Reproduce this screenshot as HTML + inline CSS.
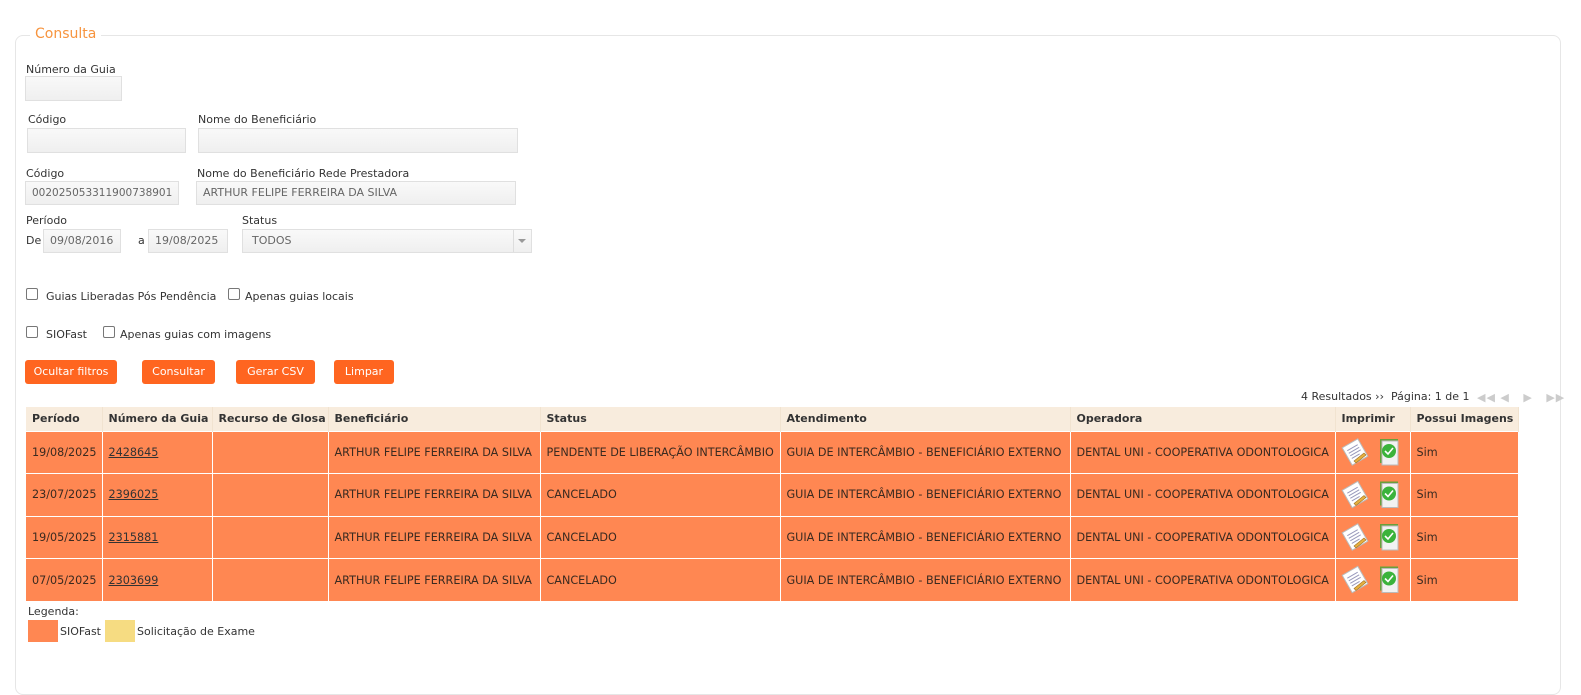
<!DOCTYPE html>
<html><head><meta charset="utf-8"><style>
*{box-sizing:border-box;margin:0;padding:0}
body{width:1581px;height:672px;background:#fff;font-family:"DejaVu Sans","Liberation Sans",sans-serif;font-size:11px;color:#333;position:relative;overflow:hidden}
.a{position:absolute;white-space:nowrap}
.fs{position:absolute;left:15px;top:35px;width:1546px;height:660px;border:1px solid #e6e6e6;border-radius:8px}
.lg{position:absolute;left:30px;top:26px;background:#fff;padding:0 5px;color:#f7943e;font-size:14px;font-family:"DejaVu Sans",sans-serif}
.in{position:absolute;border:1px solid #e0e0e0;background:linear-gradient(#f9f9f9,#efefef);color:#666;padding-left:6px;line-height:22px;font-size:11px}
.cb{position:absolute;width:12px;height:12px;border:1px solid #777;border-radius:2px;background:#fff}
.bt{position:absolute;top:360px;height:24px;background:#ff6520;color:#fff;border-radius:3px;text-align:center;line-height:24px;font-size:11px}
table{position:absolute;left:26px;top:407px;border-collapse:collapse;table-layout:fixed;width:1492px}
th{background:#f8ecdd;height:24px;text-align:left;padding-left:6px;font-weight:bold;font-size:11px;border-right:1px solid #f1e3d0;color:#333;white-space:nowrap;overflow:hidden}
td{background:#ff8752;height:42.5px;padding-left:6px;border-right:1px solid #fff;border-top:1px solid #fff;white-space:nowrap;overflow:hidden;font-size:11.2px;color:#3a2a20}
td u{color:#333}
</style></head><body>
<div class="fs"></div>
<div class="lg">Consulta</div>
<div class="a" style="left:26px;top:63px">Número da Guia</div>
<div class="in" style="left:25px;top:76px;width:97px;height:25px"></div>
<div class="a" style="left:28px;top:113px">Código</div>
<div class="in" style="left:27px;top:128px;width:159px;height:25px"></div>
<div class="a" style="left:198px;top:113px">Nome do Beneficiário</div>
<div class="in" style="left:198px;top:128px;width:320px;height:25px"></div>
<div class="a" style="left:26px;top:167px">Código</div>
<div class="in" style="left:25px;top:181px;width:154px;height:24px;font-size:10.5px">002025053311900738901</div>
<div class="a" style="left:197px;top:167px">Nome do Beneficiário Rede Prestadora</div>
<div class="in" style="left:196px;top:181px;width:320px;height:24px">ARTHUR FELIPE FERREIRA DA SILVA</div>
<div class="a" style="left:26px;top:214px">Período</div>
<div class="a" style="left:26px;top:234px">De</div>
<div class="in" style="left:43px;top:229px;width:78px;height:24px">09/08/2016</div>
<div class="a" style="left:138px;top:234px">a</div>
<div class="in" style="left:148px;top:229px;width:80px;height:24px">19/08/2025</div>
<div class="a" style="left:242px;top:214px">Status</div>
<div class="in" style="left:242px;top:229px;width:290px;height:24px;padding-left:9px">TODOS</div>
<div class="a" style="left:513px;top:230px;width:18px;height:22px;border-left:1px solid #ddd"></div>
<div class="a" style="left:518px;top:239px;width:0;height:0;border-left:4px solid transparent;border-right:4px solid transparent;border-top:4px solid #999"></div>
<div class="cb" style="left:26px;top:288px"></div><div class="a" style="left:46px;top:290px">Guias Liberadas Pós Pendência</div>
<div class="cb" style="left:228px;top:288px"></div><div class="a" style="left:245px;top:290px">Apenas guias locais</div>
<div class="cb" style="left:26px;top:326px"></div><div class="a" style="left:46px;top:328px">SIOFast</div>
<div class="cb" style="left:103px;top:326px"></div><div class="a" style="left:120px;top:328px">Apenas guias com imagens</div>
<div class="bt" style="left:25px;width:92px">Ocultar filtros</div>
<div class="bt" style="left:142px;width:73px">Consultar</div>
<div class="bt" style="left:236px;width:79px">Gerar CSV</div>
<div class="bt" style="left:334px;width:60px">Limpar</div>
<div class="a" style="left:1301px;top:390px;font-size:11px">4 Resultados ›› &nbsp;Página: 1 de 1</div>
<div class="a" style="left:1477px;top:391px;color:#ccc;font-size:11px;letter-spacing:1px">◀◀ ◀ &nbsp;&nbsp;▶ &nbsp;&nbsp;▶▶</div>
<table>
<colgroup><col style="width:76px"><col style="width:110px"><col style="width:116px"><col style="width:212px"><col style="width:240px"><col style="width:290px"><col style="width:265px"><col style="width:75px"><col style="width:108px"></colgroup>
<tr><th>Período</th><th>Número da Guia</th><th>Recurso de Glosa</th><th>Beneficiário</th><th>Status</th><th>Atendimento</th><th>Operadora</th><th>Imprimir</th><th>Possui Imagens</th></tr>
<tr><td>19/08/2025</td><td><u>2428645</u></td><td></td><td>ARTHUR FELIPE FERREIRA DA SILVA</td><td>PENDENTE DE LIBERAÇÃO INTERCÂMBIO</td><td>GUIA DE INTERCÂMBIO - BENEFICIÁRIO EXTERNO</td><td>DENTAL UNI - COOPERATIVA ODONTOLOGICA</td><td></td><td>Sim</td></tr>
<tr><td>23/07/2025</td><td><u>2396025</u></td><td></td><td>ARTHUR FELIPE FERREIRA DA SILVA</td><td>CANCELADO</td><td>GUIA DE INTERCÂMBIO - BENEFICIÁRIO EXTERNO</td><td>DENTAL UNI - COOPERATIVA ODONTOLOGICA</td><td></td><td>Sim</td></tr>
<tr><td>19/05/2025</td><td><u>2315881</u></td><td></td><td>ARTHUR FELIPE FERREIRA DA SILVA</td><td>CANCELADO</td><td>GUIA DE INTERCÂMBIO - BENEFICIÁRIO EXTERNO</td><td>DENTAL UNI - COOPERATIVA ODONTOLOGICA</td><td></td><td>Sim</td></tr>
<tr><td>07/05/2025</td><td><u>2303699</u></td><td></td><td>ARTHUR FELIPE FERREIRA DA SILVA</td><td>CANCELADO</td><td>GUIA DE INTERCÂMBIO - BENEFICIÁRIO EXTERNO</td><td>DENTAL UNI - COOPERATIVA ODONTOLOGICA</td><td></td><td>Sim</td></tr>
</table>
<svg class="a" style="left:1340px;top:436px" width="70" height="170">
<g id="ic">
<g transform="rotate(-30 15 16)"><rect x="6" y="6" width="18" height="20" fill="#fff" stroke="#bbb"/><path d="M9 11h12M9 14h12M9 17h12M9 20h9" stroke="#99b" stroke-width="1"/></g>
<path d="M14 25l10-8 2 2-10 8z" fill="#e6b040" stroke="#a07020" stroke-width=".6"/>
<rect x="40" y="3" width="18" height="24" fill="#6a9f3a"/><rect x="42" y="5" width="16" height="24" fill="#f2f2f2" stroke="#bbb"/>
<circle cx="49" cy="15" r="7" fill="#3bb33b"/><path d="M45 15l3 3 5-6" stroke="#fff" stroke-width="1.6" fill="none"/>
</g>
<use href="#ic" y="42.5"/><use href="#ic" y="85"/><use href="#ic" y="127.5"/>
</svg>
<div class="a" style="left:28px;top:605px">Legenda:</div>
<div class="a" style="left:28px;top:620px;width:30px;height:22px;background:#ff8752"></div>
<div class="a" style="left:60px;top:625px">SIOFast</div>
<div class="a" style="left:105px;top:620px;width:30px;height:22px;background:#f6dc82"></div>
<div class="a" style="left:137px;top:625px">Solicitação de Exame</div>
</body></html>
